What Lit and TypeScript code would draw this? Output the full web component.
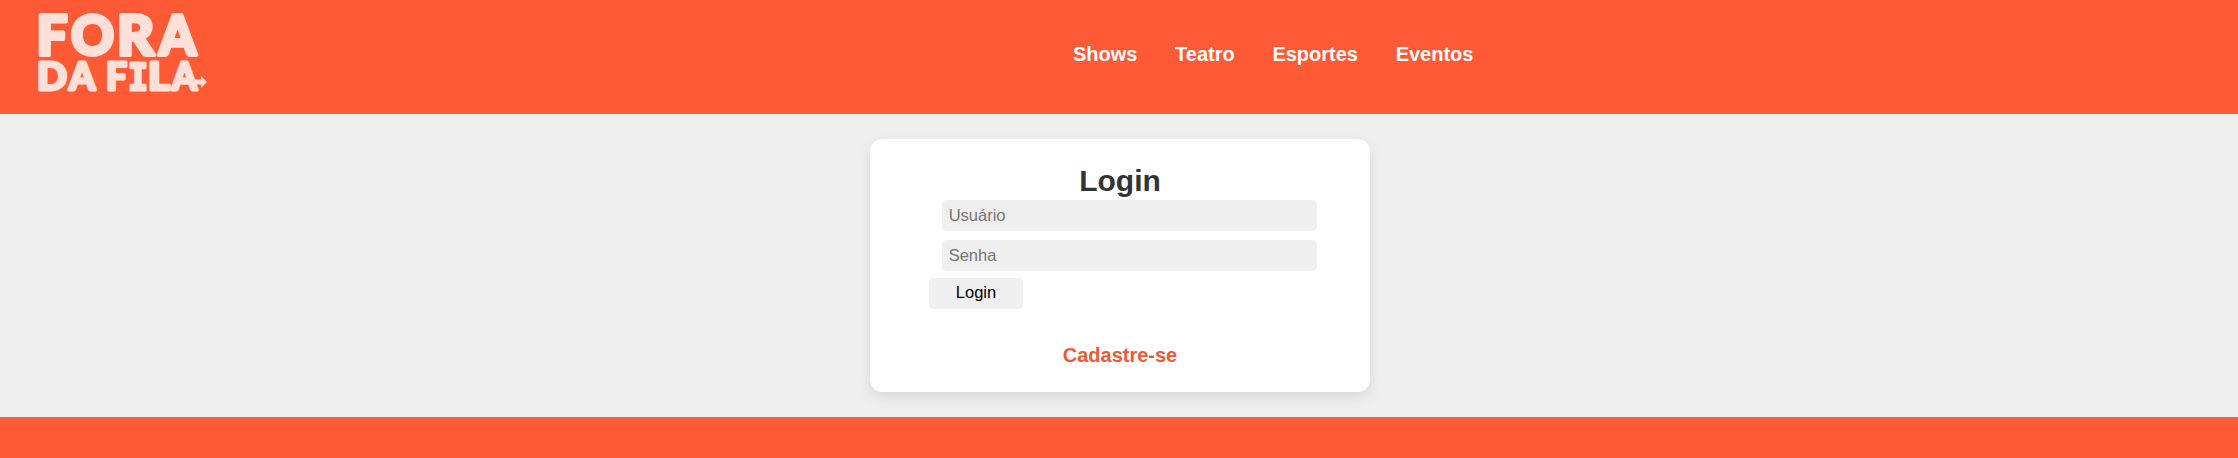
import { LitElement, html, css } from "lit";
import { customElement } from "lit/decorators.js";

@customElement("app-root")
export class AppRoot extends LitElement {
  static styles = css`
    :host {
      display: flex;
      flex-direction: column;
      height: 458px;
      background: #efefef;
      font-family: "Liberation Sans", Arial, sans-serif;
    }
    * { box-sizing: border-box; }
    header {
      display: flex;
      height: 114px;
      background: #ff5a36;
    }
    .logo { display: block; width: 220px; height: 114px; }
    .logo text {
      font-family: Lato, sans-serif;
      font-weight: 900;
      stroke-linejoin: round;
    }
    .logo .slab { font-family: "DejaVu Sans Mono", monospace; font-weight: 700; }
    nav {
      display: flex;
      gap: 37.67px;
      padding: 43px 0 0 853px;
      font-size: 20px;
      line-height: 23px;
      font-weight: bold;
    }
    nav a { color: #fff; text-decoration: none; }
    main {
      flex: 1;
      display: flex;
      justify-content: center;
      align-items: flex-start;
      padding-top: 25px;
    }
    .card {
      width: 500px;
      height: 253px;
      margin-left: 2px;
      padding: 24px 0 0;
      border-radius: 12px;
      background: #fff;
      box-shadow: 0 5px 13px rgba(0, 0, 0, 0.1);
      display: flex;
      flex-direction: column;
    }
    h1 {
      margin: 0;
      height: 37px;
      line-height: 35px;
      font-size: 30px;
      text-align: center;
      color: #333;
    }
    input, button {
      display: block;
      height: 31px;
      border: 0;
      border-radius: 5px;
      background: #efefef;
      font: 16.5px "Liberation Sans", Arial, sans-serif;
    }
    input { width: 375px; margin: 0 0 9px 72px; padding: 0 6.67px; }
    input::placeholder { color: #757575; }
    button { width: 94px; margin: -2px 0 0 59px; padding: 0 0 2px; color: #000; }
    .signup {
      margin-top: 35px;
      text-align: center;
      font-size: 20px;
      line-height: 23px;
      font-weight: bold;
      color: #f0593a;
      text-decoration: none;
    }
    footer { height: 41px; background: #ff5a36; }
  `;

  render() {
    return html`
      <header>
        <svg class="logo" viewBox="0 0 220 114" fill="#ffe0d8" stroke="#ffe0d8">
          <text y="55" font-size="56" stroke-width="4"><tspan x="36.5" textLength="31" lengthAdjust="spacingAndGlyphs">F</tspan><tspan x="71" textLength="43" lengthAdjust="spacingAndGlyphs">O</tspan><tspan x="117" textLength="37" lengthAdjust="spacingAndGlyphs">R</tspan><tspan x="159" textLength="37" lengthAdjust="spacingAndGlyphs">A</tspan></text>
          <text y="90" font-size="37" stroke-width="3"><tspan x="37" textLength="30" lengthAdjust="spacingAndGlyphs">D</tspan><tspan x="69" textLength="25" lengthAdjust="spacingAndGlyphs">A</tspan> <tspan x="106" textLength="21" lengthAdjust="spacingAndGlyphs">F</tspan><tspan class="slab" x="128" textLength="20" lengthAdjust="spacingAndGlyphs">I</tspan><tspan x="148" textLength="22" lengthAdjust="spacingAndGlyphs">L</tspan><tspan x="172" textLength="25" lengthAdjust="spacingAndGlyphs">A</tspan></text>
          <path d="M182 79.500H201V76L207 82L201 88V84.500H182Z" stroke="none" />
        </svg>
        <nav>
          <a>Shows</a><a>Teatro</a><a>Esportes</a><a>Eventos</a>
        </nav>
      </header>
      <main>
        <section class="card">
          <h1>Login</h1>
          <input type="text" placeholder="Usuário" />
          <input type="password" placeholder="Senha" />
          <button type="button">Login</button>
          <a class="signup">Cadastre-se</a>
        </section>
      </main>
      <footer></footer>
    `;
  }
}
